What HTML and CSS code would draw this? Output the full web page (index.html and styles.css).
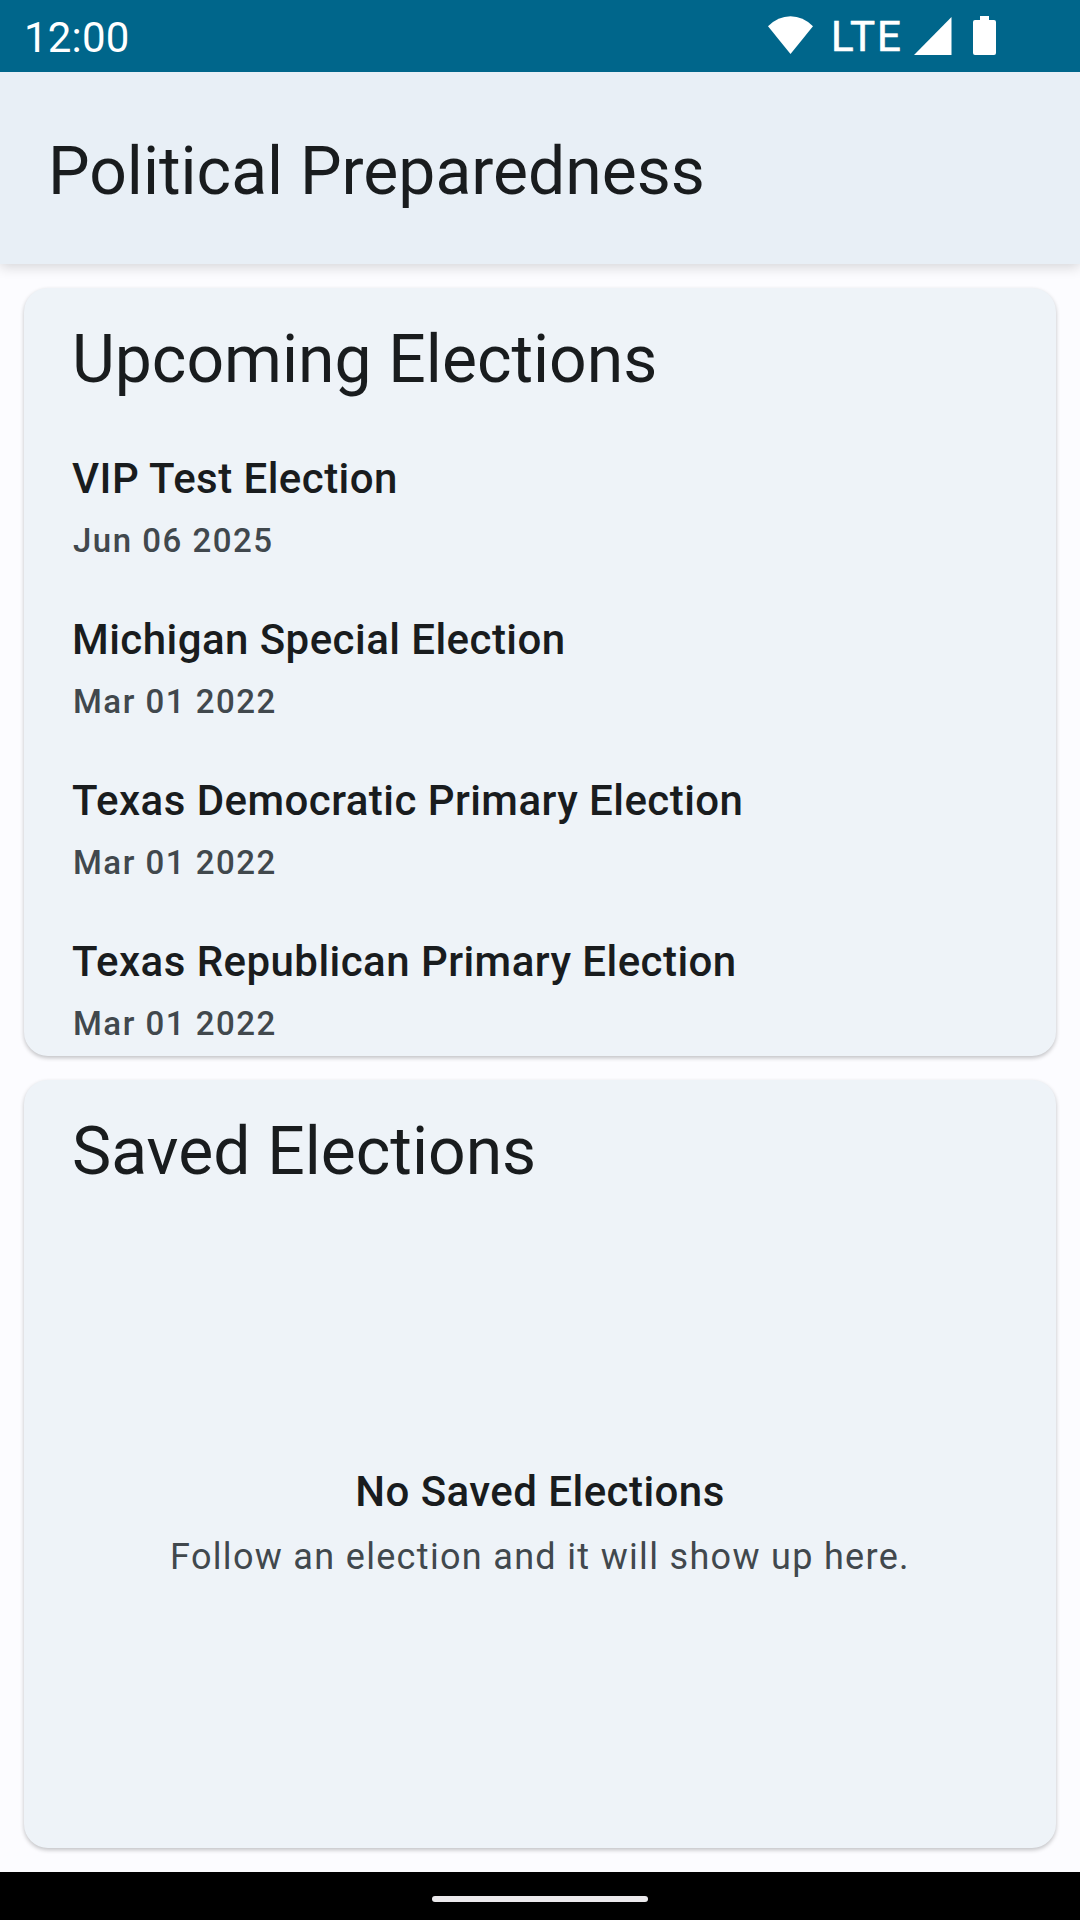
FILE: index.html
```html
<!DOCTYPE html>
<html lang="en">
<head>
<meta charset="utf-8">
<title>Political Preparedness</title>
<link rel="stylesheet" href="styles.css">
</head>
<body>
<div class="status-bar">
  <span class="clock">12:00</span>
  <div class="status-icons">
    <svg class="wifi" width="45" height="38" viewBox="0 0 45 38"><path d="M22.500 38 0 10.300Q10 .3 22.500 .3T45 10.300Z" fill="#fff"/></svg>
    <span class="network">LTE</span>
    <svg class="signal" width="38" height="38" viewBox="0 0 38 38"><path d="M0 38H37.500V0Z" fill="#fff"/></svg>
    <svg class="battery" width="23" height="39" viewBox="0 0 23 39"><path d="M7 0h9v4h5q2 0 2 2v31q0 2-2 2H2q-2 0-2-2V6q0-2 2-2h5Z" fill="#fff"/></svg>
  </div>
</div>
<header class="app-bar"><h1 class="title">Political Preparedness</h1></header>
<main class="content">
  <section class="card">
    <h2 class="title">Upcoming Elections</h2>
    <ul class="elections">
      <li class="election"><span class="name">VIP Test Election</span><span class="date">Jun 06 2025</span></li>
      <li class="election"><span class="name">Michigan Special Election</span><span class="date">Mar 01 2022</span></li>
      <li class="election"><span class="name">Texas Democratic Primary Election</span><span class="date">Mar 01 2022</span></li>
      <li class="election"><span class="name">Texas Republican Primary Election</span><span class="date">Mar 01 2022</span></li>
    </ul>
  </section>
  <section class="card">
    <h2 class="title">Saved Elections</h2>
    <div class="empty">
      <span class="name">No Saved Elections</span>
      <span class="hint">Follow an election and it will show up here.</span>
    </div>
  </section>
</main>
<div class="nav-bar"><div class="handle"></div></div>
</body>
</html>
```
FILE: styles.css
```css
* { box-sizing: border-box; }
body {
  margin: 0;
  height: 1920px;
  display: flex;
  flex-direction: column;
  overflow: hidden;
  background: #fcfcff;
  color: #191c1e;
  font-family: Roboto, sans-serif;
}
.status-bar {
  height: 72px;
  flex: none;
  display: flex;
  justify-content: space-between;
  padding: 0 84px 0 24px;
  background: #00668b;
  color: #fff;
}
.clock { font-size: 42px; line-height: 76px; letter-spacing: .2px; }
.status-icons { display: flex; align-items: flex-start; }
.wifi { margin: 16px 16px 0 0; }
.network { width: 73px; margin-left: 2px; font-size: 42px; line-height: 74px; letter-spacing: 2px; -webkit-text-stroke: .6px #fff; }
.signal { margin: 17px 21px 0 10px; }
.battery { margin-top: 16px; }
.app-bar {
  height: 192px;
  flex: none;
  display: flex;
  align-items: center;
  padding: 8px 48px 0;
  background: #e8eff6;
  box-shadow: 0 3px 12px rgba(0, 0, 0, .16);
  clip-path: inset(0 0 -24px 0);
}
.title { margin: 0; font-size: 66px; line-height: 84px; font-weight: 400; word-spacing: .5px; }
.content {
  flex: 1;
  min-height: 0;
  display: grid;
  grid-template-rows: 1fr 1fr;
  gap: 24px;
  padding: 24px;
}
.card {
  min-height: 0;
  display: flex;
  flex-direction: column;
  overflow: hidden;
  padding: 30px 48px 0;
  border-radius: 24px;
  background: #eef3f8;
  box-shadow: 0 2px 4px rgba(0, 0, 0, .24);
}
.elections { margin: 0; padding: 0; list-style: none; }
.election { height: 161px; display: flex; flex-direction: column; padding-top: 41px; }
.name { font-size: 42px; line-height: 72px; font-weight: 500; letter-spacing: .45px; }
.date { padding: 2px 0 0 1px; font-size: 33px; line-height: 48px; font-weight: 500; letter-spacing: 1.5px; color: #41484d; }
.empty {
  flex: 1;
  display: flex;
  flex-direction: column;
  align-items: center;
  justify-content: center;
  padding-top: 1px;
}
.hint { font-size: 36px; line-height: 59px; letter-spacing: 1.32px; color: #41484d; }
.nav-bar {
  height: 48px;
  flex: none;
  display: flex;
  justify-content: center;
  align-items: center;
  padding-top: 6px;
  background: #000;
}
.handle { width: 216px; height: 6px; border-radius: 3px; background: #ebe9ec; }
```
